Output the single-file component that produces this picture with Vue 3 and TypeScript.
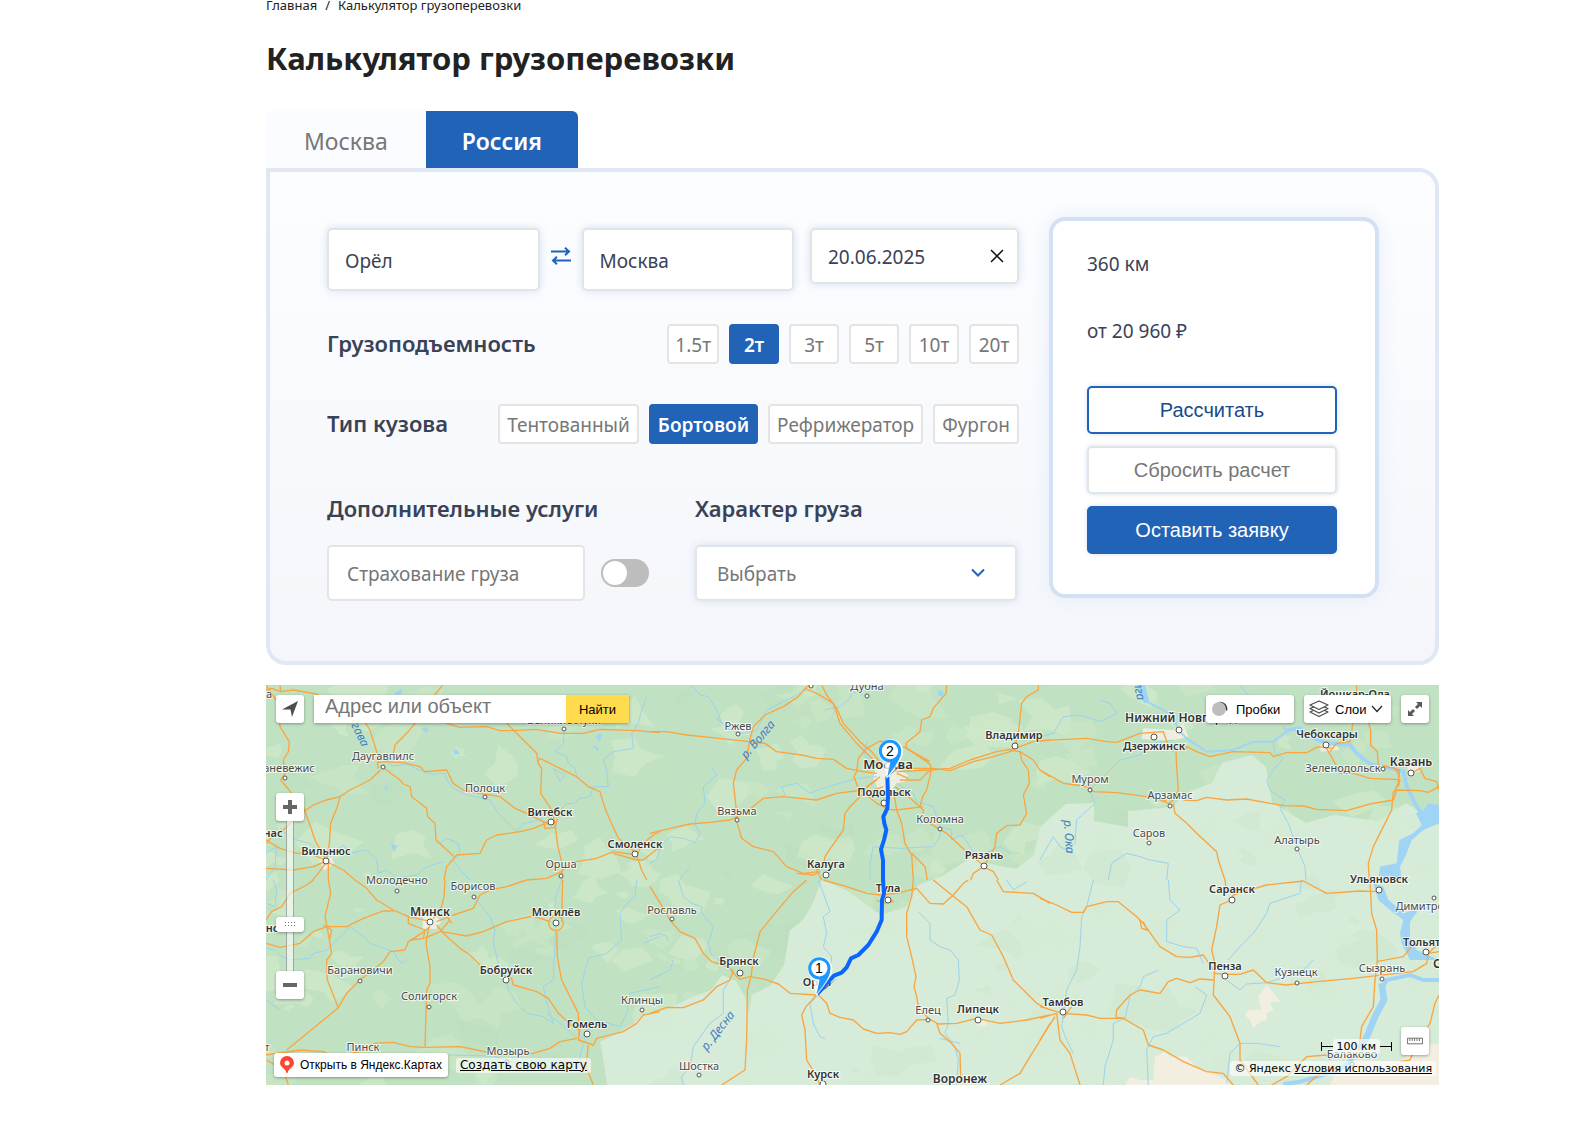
<script setup lang="ts">
import { ref } from 'vue'

type City = [name: string, x: number, y: number, dotX?: number, dotY?: number, weight?: number]
interface Sheet {
  ox: number
  oy: number
  roads: string[]
  rivers: string[]
  cities: City[]
}

const from = ref('Орёл')
const to = ref('Москва')
const date = ref('20.06.2025')
const capacities = ['1.5т', '2т', '3т', '5т', '10т', '20т']
const capacity = ref('2т')
const bodies = ['Тентованный', 'Бортовой', 'Рефрижератор', 'Фургон']
const body = ref('Бортовой')
const insured = ref(false)
const cargo = ref('')
const tab = ref('Россия')

function swap() {
  const old = from.value
  from.value = to.value
  to.value = old
}

// Map sheets: line work is in thirds of a pixel, ox/oy is each sheet's origin.
const sheets: Sheet[] = [
  {
    ox: -18, oy: -15,
    roads: [
      'M60,15 L62,35 L100,30 L170,42 L230,75 L300,105 L330,150 L350,215 L355,245',
      'M18,30 L35,25 L62,35 M18,15 L55,70 L60,140 L88,185 L85,215 L70,240 L75,280 L62,300 L75,315 L95,340 L130,380 L148,430 L165,480 L195,535',
      'M548,15 L520,50 L465,130 L440,160 L405,195 L398,235 L370,245 L352,248 L355,265',
      'M370,245 L430,248 L480,260 L495,275 L560,270 L580,310 L610,330 L660,340 L720,350 L765,385 L800,400 L850,425 L870,430',
      'M560,130 L600,142 L680,140 L720,152 L760,152 L830,148 L900,160 L970,160 L1020,148 L1130,152 L1200,158',
      'M740,130 L800,190 L830,220 L835,250 L845,265 L842,340 L875,390 L885,430 L892,490 L908,560 L905,600',
      'M832,245 L840,235 L900,265 L950,290 L985,320 L1020,335 L1035,385 L1050,420 L1075,475 L1130,520',
      'M368,262 L420,300 L430,312 L450,320 L455,350 L475,365 L500,385 L503,410 L525,430 L528,480 L555,505 L582,530',
      'M362,270 L330,300 L270,330 L240,350 L200,360 L160,375 L110,410 L70,450 L40,465 L20,490',
      'M240,350 L232,380 L212,430 L208,490 L200,540',
      'M870,430 L850,433 L820,445 L780,455 L710,465 L680,480 L660,520 L590,525 L560,560 L552,600',
      'M850,425 L855,445 L885,443 L892,415',
      'M1130,525 L1060,515 L1010,535 L930,548 L905,575 L860,595 L800,600',
      'M1130,525 L1150,490 L1180,465 L1200,455 M1130,525 L1145,570 L1160,600 M1060,520 L1130,540 L1150,540 L1200,500',
      'M18,480 L60,505 L110,520 L150,520 L195,540 M18,565 L100,570 L160,560 L195,545 M200,545 L175,580 L158,600 M205,545 L205,600 M200,545 L250,570 L285,600',
    ],
    rivers: [
      'M385,250 L400,258 L440,252 L460,262 L490,275 L520,283 L555,280 L560,300 L580,325 L620,345 L690,360 L715,400 L740,425 L770,455 L790,430 L820,425 L850,415',
      'M900,390 L920,370 L940,372 L960,355 L990,350 L1000,320 L1045,320 L1040,270 L1030,240 L1060,215 L1120,205 L1115,160 L1135,130 L1145,90 L1160,50',
      'M912,150 L910,190 L885,215 L920,230 L925,250 L945,265 L950,290 M880,265 L900,305 L915,285 L880,265',
      'M60,445 L90,470 L110,480 L150,490 L180,520 L230,510 L250,495 L270,520 L320,510 L350,540 L355,580 L380,570 L410,595 L470,585 L500,560 L550,545',
      'M540,490 L560,475 L595,490 L600,520 L580,540 L600,570 L630,600',
      'M18,520 L50,500 L45,560 L18,600',
    ],
    cities: [
      ['а', 28, 52], ['Великие Луки', 913, 132, 913, 146],
      ['Даугавпилс', 369, 238, 369, 261], ['аневежис', 87, 274, 75, 294],
      ['Полоцк', 675, 335, 676, 352], ['Витебск', 871, 406, 872, 427, 600],
      ['Смоленск', 1124, 502, 1124, 522, 600], ['Орша', 902, 563, 902, 587],
      ['Вильнюс', 198, 523, 198, 543, 600], ['нас', 40, 470, undefined, undefined, 600],
    ],
  },
  {
    ox: -18, oy: 585,
    roads: [
      'M160,0 L140,15 L90,40 L65,80 L35,95 L18,120',
      'M205,0 L212,40 L195,110 L205,160 L215,220 L200,240 L202,300 L235,383',
      'M18,190 L60,202 L120,190 L160,155 L200,140 L260,140 L310,115 L370,93 L400,93 M190,135 L215,150 L210,175',
      'M285,0 L320,25 L350,60 L400,90 L445,110 L500,122',
      'M555,0 L552,50 L545,80 L520,115',
      'M800,0 L740,20 L690,30 L660,45 L640,85 L580,105 L530,125',
      'M510,140 L485,160 L445,185 L435,210 L390,215 L370,245 L300,300 L260,340 L235,383 L160,445 L80,510',
      'M507,140 L498,190 L510,260 L510,310 L500,330 L495,500',
      'M530,135 L550,160 L600,205 L630,225 L660,255 L730,285 L755,295 L760,315 L830,335 L865,355 L895,400 L940,440 L960,450',
      'M545,155 L620,168 L670,155 L740,125 L820,108 L870,125',
      'M445,110 L445,130 L495,150 L490,175 L450,180 M565,115 L575,130 M493,175 L540,155 L570,120',
      'M908,0 L905,125 M866,130 a22,22 0 1 0 44,0 a22,22 0 1 0 -44,0',
      'M890,155 L892,230 L905,300 L930,350 L955,400 L958,470',
      'M18,525 L120,510 L190,515 L220,530 L300,515 L345,490 L400,487 L450,500 L495,502 L600,500 L650,510 L720,525 L820,520 L870,505 L900,485 L950,475',
      'M960,450 L955,480 L1000,495 L1010,475 L1090,455 L1130,430 L1150,405 L1200,395',
      'M985,495 L978,560 L1000,615 M20,540 L70,570 L85,615',
    ],
    rivers: [
      'M18,205 L45,210 L60,225 L90,240 L150,235 L160,220 L200,210 L250,160 L270,140 L310,170 L330,190 L360,200 L400,215 L415,240 L430,250 L445,235',
      'M18,70 L45,80 L50,30 L40,0',
      'M650,60 L690,110 L705,150 L700,190 L715,250 L740,290 L745,330 L770,370 L800,400 L850,410 L880,430 L870,400 L858,360 L850,320 L880,300 L885,180 L885,60 L905,0',
      'M1130,0 L1125,50 L1110,60 L1080,100 L1085,180 L1040,220 L985,235 L965,310 L975,380 L1010,420 L1080,440 L1100,400 L1110,340 L1200,320',
      'M860,400 L900,430 L960,480 L1000,430 M18,360 L60,390',
      'M560,525 L700,528 L800,560 L950,570 L975,470 M1150,190 L1200,170',
    ],
    cities: [
      ['Молодечно', 411, 10, 412, 32], ['Борисов', 640, 30, 641, 52],
      ['Минск', 510, 106, 510, 126, 700], ['Могилёв', 888, 108, 888, 129, 600],
      ['нс', 35, 156, undefined, undefined, 600], ['Барановичи', 300, 282, 301, 304],
      ['Бобруйск', 737, 280, 739, 301, 600], ['Солигорск', 508, 358, 508, 380],
      ['Клинцы', 1146, 370, 1147, 389], ['Гомель', 982, 442, 981, 462, 600],
      ['Пинск', 310, 513], ['Мозырь', 743, 524, 742, 545], ['т', 20, 513],
    ],
  },
  {
    ox: 1152, oy: -15,
    roads: [
      'M0,155 L50,155 L110,165 L235,178 L298,185',
      'M298,185 L310,140 L345,105 L400,80 L445,50 L470,20 L490,15',
      'M298,185 L290,235 L260,270 L250,310 L258,380 L262,430 L275,475 L310,500 L370,515 L410,560 L460,580 L510,575',
      'M298,185 L345,190 L380,215 L455,225 L500,235 L550,238 L590,265 L640,275 L680,280',
      'M465,25 L500,40 L550,70 L570,130 L620,190 L650,220 L690,260',
      'M515,15 L530,45 L560,85 L580,130 L630,185 L665,215 L700,260',
      'M890,15 L888,40 L850,85 L840,110 L815,120 L810,155 L768,190 L770,205 L830,245 L842,255 L842,280 L830,330 L818,350 L810,380',
      'M0,460 L60,445 L120,432 L180,427 L240,420 L290,395 L340,355 L400,350 L500,360 L560,340 L640,330 L680,300',
      'M715,190 L690,183 L650,205 L625,235 L620,275 L612,290 L625,325 L650,345 L680,370 L715,388 L740,390 L820,380',
      'M650,330 L600,380 L585,400 L580,450 L545,500 L525,530 L520,560',
      'M740,275 L840,270 L900,265 L960,240 L1040,215 L1095,205 L1150,185 L1200,180',
      'M760,265 L850,265 L900,272 L970,245 L1030,230 L1090,212',
      'M1165,15 L1165,30 L1130,50 L1115,70 L1105,160 L1095,200',
      'M1070,208 L1110,215 L1115,240 L1135,270 L1138,310 L1120,345 L1130,400 L1110,435 L1070,437 L1040,460 L1035,500 L1005,555',
      'M735,320 L770,345 L820,390 L820,410 L840,430 L890,460 L960,525 L1000,555',
      'M730,330 L740,390 L755,430 L765,490 L785,525 L790,600 M785,520 L825,560 L832,600',
      'M1000,560 L970,580 L962,600 M1000,560 L1030,575 L1045,600 M1110,215 L1150,240 L1170,270 L1200,290',
      'M690,290 L650,320 M700,320 L660,335 M750,300 L810,300 L840,270 M760,200 L840,245 M740,280 L775,295',
      'M510,575 L490,585 L440,580 M520,560 L500,570 L515,600',
    ],
    rivers: [
      'M125,15 L150,45 L175,50 L200,90 L215,130 L200,115 L240,150 L280,160 L320,150 L350,90 L400,65 L470,30',
      'M185,262 L200,285 L160,320 L165,370 L140,400 L135,435 L150,460 L135,488 L100,475 L60,470 L30,500 L20,540 L0,550',
      'M525,90 L570,80 L600,55 L605,35 L640,45',
      'M405,345 L395,320 L440,310 L480,340 L520,325 L570,310 L620,295 L680,290',
      'M740,310 L790,340 L800,365 L850,380 L870,440 L905,450 L905,480 L935,465 L960,500 L980,530 L1050,500 L1080,520',
      'M660,600 L660,550 L670,500 L750,505 L850,500 L870,470 L872,445',
      'M120,565 L95,590 L90,600 M655,180 L640,215 L660,250 M1175,15 L1200,15',
    ],
    cities: [
      ['Дубна', 652, 30, 652, 47], ['Ржев', 265, 149, 265, 163],
      ['Вязьма', 260, 405, 260, 421], ['Москва', 713, 267, undefined, undefined, 800],
      ['Подольск', 703, 346, 703, 368, 600], ['Владимир', 1093, 176, 1095, 198, 600],
      ['Коломна', 870, 428, 871, 446], ['Калуга', 528, 562, 528, 585, 600],
      ['Рязань', 1002, 537, 1002, 559, 600], ['', 483, 0, 483, 18],
    ],
  },
  {
    ox: 1152, oy: 585,
    roads: [
      'M0,20 L40,85 L60,120 L90,155 L135,175 L160,220 L185,245 L235,260 L255,285 L270,298 L300,290',
      'M470,0 L430,35 L400,70 L375,100 L330,155 L310,235 L303,290 L292,330 L290,480 L285,570 L215,615',
      'M300,290 L345,298 L385,312 L420,340 L500,345',
      'M0,400 L50,382 L100,383 L160,360 L200,320 L240,300 L250,270',
      'M500,345 L468,380 L455,405 L465,450 L470,540 L500,590 L510,615',
      'M505,345 L530,370 L540,400 L570,412 L610,420 L640,447 L680,460 L720,458 L750,463 L770,455 L800,420 L840,418 L865,432 L920,430 L980,415 L1050,430 L1130,420 L1200,405',
      'M790,0 L785,50 L770,100 L770,170 L785,230 L798,290 L792,320 L800,350 L805,380 L835,415',
      'M860,430 L870,460 L900,485 L930,520 L932,590',
      'M520,0 L590,20 L650,40 L690,45 L740,40 L800,25 L840,70 L880,72 L910,45 L940,10 L955,0',
      'M850,0 L880,25 L905,45 L950,80 L990,150 L1025,165 L1060,230 L1090,300 L1160,370 L1200,390',
      'M1040,0 L1060,35 L1150,40 L1200,70',
      'M1050,615 L1110,580 L1140,530 L1165,490 L1200,430',
      'M680,60 L700,70 L730,65 L700,45',
    ],
    rivers: [
      'M85,0 L100,50 L125,70 L155,80 L155,100 L190,140 L175,190 L185,225 L250,270 M240,300 L220,330 L220,400 L180,430 L130,500 L120,560 L95,590 L100,615',
      'M505,0 L520,40 L540,95 L520,110 L530,160 L520,200 L545,230 L540,280 L510,340 L480,370 L490,430 L510,470 L525,475',
      'M805,95 L840,130 L840,180 L870,200 L900,210 L925,240 L928,300 L915,345 L890,355 L895,430 L885,460 L915,500 L925,540 L920,615',
      'M870,475 L930,490 M0,170 L30,160 L50,170 L55,185 M70,240 L60,270 L0,300 M1070,0 L1090,30 L1130,5',
    ],
    cities: [
      ['Рославль', 65, 100, 65, 116], ['Тула', 714, 36, 714, 60, 600],
      ['Брянск', 268, 255, 270, 279, 600], ['Орёл', 502, 317, undefined, undefined, 600],
      ['Елец', 834, 400, 835, 419], ['Липецк', 984, 399, 984, 421, 600],
      ['Шостка', 147, 570, 148, 586], ['Курск', 518, 594, 518, 612, 600],
      ['Воронеж', 930, 607, undefined, undefined, 700],
    ],
  },
  {
    ox: 2322, oy: -15,
    roads: [
      'M0,182 L140,175 L200,185 L230,187 L300,160 L370,155 L382,190 L400,215',
      'M0,270 L70,310 L110,315 L150,322 L160,335 L230,338 L320,350 L380,362',
      'M408,215 L410,260 L415,330 L400,360 L385,370 L340,352',
      'M400,208 L435,210 L440,200 L470,215 L510,230 L580,215 L690,218 L700,230 L740,218 L800,218 L835,200 L880,205',
      'M430,360 L470,362 L500,352 L560,360 L620,357 L690,370 L730,377 L790,378 L830,388 L920,392 L990,372 L1060,360 L1070,330 L1140,332 L1165,337 L1197,320',
      'M400,370 L405,400 L440,430 L470,460 L530,515 L535,540 L555,600',
      'M860,205 L885,250 L900,280 L940,280 L990,295 L1060,298 L1080,300 L1075,320',
      'M950,15 L950,60 L940,120 L930,185 L890,190 L870,215',
      'M980,110 L992,150 L992,195 L1012,215 L1015,255 L1065,265 L1080,290',
      'M1115,280 L1140,265 L1155,295 L1190,305 L1197,330',
      'M1060,335 L1055,390 L1035,430 L1000,500 L985,550 L988,600 M1060,265 L1078,270 L1075,310 L1060,340',
    ],
    rivers: [
      'M0,170 L40,160 L70,110 L120,105 L180,125 L230,100 L210,70 L180,60',
      'M400,180 L340,190 L300,225 L240,240 L190,290 L150,330 L165,370 L110,420 L105,490 L80,510 L60,500 L40,470 L0,540',
      'M205,600 L215,550 L260,520 L300,530 L330,540 L385,550 L380,600',
      'M700,190 L705,220 L730,235 L700,270 L680,300 L690,330 L735,360 L720,385 L745,430 L770,500 L795,560 L798,600',
      'M600,15 L620,40 L650,60',
    ],
    cities: [
      ['Йошкар-Ола', 945, 54, undefined, undefined, 600],
      ['Нижний Новгород', 424, 125, 417, 150, 700], ['Дзержинск', 341, 208, 341, 170, 600],
      ['Муром', 149, 309, 149, 331], ['Арзамас', 390, 356, 389, 377],
      ['Саров', 326, 470, 326, 488], ['Алатырь', 770, 490, 770, 508],
      ['Чебоксары', 860, 173, 858, 196, 600], ['Зеленодольск', 910, 276, 1028, 266],
      ['Казань', 1112, 258, 1113, 279, 700], ['Ульяновск', 1017, 609, 1017, 631, 600],
    ],
  },
  {
    ox: 2322, oy: 585,
    roads: [
      'M0,55 L50,75 L95,97 L130,97 L140,80 L200,65 L235,65 L290,110 L310,130 L360,200 L410,230 L450,232 L490,225 L520,270',
      'M300,120 L305,145 L322,150 L310,125',
      'M575,60 L540,75 L530,140 L515,210 L525,250 L520,345 L570,410 L600,490 L600,540 L655,615',
      'M575,60 L580,45 L610,35 L680,15 L790,3 L860,40 L960,33 L1010,35 M555,0 L560,40',
      'M990,0 L995,100 L1010,150 L1012,240 L1005,300 L1000,380 L965,440 L955,520',
      'M520,280 L560,283 L600,283 L640,270 L680,308 L740,315 L830,305 L940,295 L1010,287 L1120,275 L1160,250 L1165,220 L1197,215',
      'M1010,245 L1090,230 L1115,200 M1197,190 L1165,220',
      'M520,300 L480,297 L450,308 L410,295 L385,305 L360,340 L300,330 L270,345 L230,390 L228,412 L255,415',
      'M0,380 L50,395 L70,400 L140,405 L180,415 L250,415 L310,450 L325,495 L370,510 L430,545 L500,575 L550,580 L580,615',
      'M50,400 L60,480 L90,520 L120,615 M50,400 L0,415 M45,410 L0,480 M70,415 L95,380',
      'M1197,345 L1185,370 L1170,430 L1130,490 L1110,540 L1080,545',
      'M695,615 L740,590 L800,530 L860,525 L870,540 M800,615 L840,580 L900,560',
    ],
    rivers: [
      'M160,0 L140,80 L125,110 L120,200 L110,270 L80,330 L70,400 L65,440 L80,480 L100,520',
      'M385,0 L390,60 L420,90 L380,120 L380,185 L430,200 L470,205 L490,250',
      'M785,0 L780,40 L690,70 L680,100 L640,160 L600,200 L565,240',
      'M355,270 L310,290 L300,320 L270,350 L255,415 L220,430 L220,480 L195,560 L190,615',
      'M465,320 L500,345 L480,400 L430,430 L380,460 L340,470 L320,510 L325,615',
      'M560,300 L600,330 L620,312 L680,308 L740,290 L780,280 L820,240',
      'M560,610 L570,520 L600,490 L650,490 L720,500',
    ],
    cities: [
      ['Саранск', 576, 38, 576, 60, 600], ['Димитровград', 1186, 90, 1183, 53],
      ['Тольятти', 1164, 198, 1157, 217, 600], ['Пенза', 555, 268, 555, 289, 600],
      ['Кузнецк', 769, 288, 770, 308], ['Сызрань', 1027, 276, 1027, 298],
      ['Самара', 1248, 264, undefined, undefined, 700], ['Тамбов', 68, 376, 69, 397, 600],
      ['Балаково', 936, 533, 936, 552],
    ],
  },
]

const cities = sheets.flatMap((s) =>
  s.cities.map(([name, x, y, dotX, dotY, weight]) => ({
    name,
    x: Math.round((x + s.ox) / 3),
    y: Math.ceil((y + s.oy) / 3),
    dot: dotX !== undefined && dotY !== undefined
      ? { x: Math.round((dotX + s.ox) / 3), y: Math.round((dotY + s.oy) / 3) }
      : null,
    kind: weight === 800 ? 'capital' : weight === 700 ? 'major' : weight === 600 ? 'city' : 'town',
  })),
)

const riverNames = [
  { name: 'р. Волга', x: 495, y: 57, angle: -50 },
  { name: 'Даугава', x: 86, y: 42, angle: 64 },
  { name: 'р. Десна', x: 455, y: 348, angle: -52 },
  { name: 'р. Ока', x: 799, y: 152, angle: 86 },
  { name: 'Волга', x: 868, y: 0, angle: 78 },
]

// Woodland and field patches, spread by a fixed-seed generator.
let seed = 7
const rnd = () => {
  seed = (seed * 16807) % 2147483647
  return seed / 2147483647
}
const patches = Array.from({ length: 300 }, () => {
  const cx = rnd() * 1173
  const cy = rnd() * 400
  const n = 6 + Math.floor(rnd() * 5)
  const size = 4 + rnd() * 20
  const points = Array.from({ length: n }, (_, i) => {
    const a = (i / n) * Math.PI * 2
    const r = size * (0.3 + rnd() * 0.9)
    return `${Math.round(cx + Math.cos(a) * r * 1.4)},${Math.round(cy + Math.sin(a) * r)}`
  }).join(' ')
  return { points, pale: rnd() > 0.25 }
})
</script>

<template>
  <main class="page">
    <nav class="crumbs" aria-label="Навигация">
      <a href="#">Главная</a><span>/</span><span>Калькулятор грузоперевозки</span>
    </nav>
    <h1>Калькулятор грузоперевозки</h1>

    <div class="tabs">
      <button v-for="t in ['Москва', 'Россия']" :key="t" type="button" class="tab" :class="{ active: tab === t }" @click="tab = t">{{ t }}</button>
    </div>

    <form class="panel" @submit.prevent>
      <div class="fields">
        <div class="route">
          <input v-model="from" class="box place" type="text" aria-label="Откуда" />
          <button type="button" class="swap" aria-label="Поменять местами" @click="swap">
            <svg width="20" height="18" viewBox="0 0 20 18" fill="none" stroke="#2163b6" stroke-width="2">
              <path d="M0 4.500H18M14 .8L18 4.500L14 8.200" /><path d="M20 13.500H2M6 9.800L2 13.500L6 17.200" />
            </svg>
          </button>
          <input v-model="to" class="box place" type="text" aria-label="Куда" />
          <div class="box date">
            <input v-model="date" type="text" aria-label="Дата" />
            <button type="button" aria-label="Очистить дату" @click="date = ''">
              <svg width="14" height="14" viewBox="0 0 14 14" stroke="#111" stroke-width="1.500"><path d="M1 1L13 13M13 1L1 13" /></svg>
            </button>
          </div>
        </div>

        <div class="choice">
          <h2>Грузоподъемность</h2>
          <div class="chips">
            <button v-for="c in capacities" :key="c" type="button" class="chip short" :class="{ active: capacity === c }" @click="capacity = c">{{ c }}</button>
          </div>
        </div>
        <div class="choice">
          <h2>Тип кузова</h2>
          <div class="chips">
            <button v-for="b in bodies" :key="b" type="button" class="chip" :class="{ active: body === b }" @click="body = b">{{ b }}</button>
          </div>
        </div>

        <div class="extras">
          <div class="services">
            <h2>Дополнительные услуги</h2>
            <div class="service">
              <label class="insurance" for="insurance">Страхование груза</label>
              <input id="insurance" v-model="insured" type="checkbox" class="toggle" />
            </div>
          </div>
          <div class="cargo">
            <label class="heading" for="cargo">Характер груза</label>
            <div class="selectwrap">
              <select id="cargo" v-model="cargo" class="box">
                <option value="">Выбрать</option>
              </select>
              <svg class="chev" width="14" height="10" viewBox="0 0 14 10" fill="none" stroke="#2163b6" stroke-width="2"><path d="M1 1.500L7 7.500L13 1.500" /></svg>
            </div>
          </div>
        </div>
      </div>

      <aside class="card">
        <p>360 км</p>
        <p>от 20 960 ₽</p>
        <div class="actions">
          <button type="submit" class="action outline">Рассчитать</button>
          <button type="reset" class="action plain">Сбросить расчет</button>
          <button type="button" class="action solid">Оставить заявку</button>
        </div>
      </aside>
    </form>

    <section class="map" aria-label="Карта маршрута">
      <svg class="canvas" viewBox="0 0 1173 400" preserveAspectRatio="xMidYMid slice">
        <rect width="1173" height="400" fill="#c1e2c2" />
        <g>
          <polygon v-for="(p, i) in patches" :key="i" :points="p.points" :fill="p.pale ? '#c9e7c5' : '#bbdfbd'" :opacity="p.pale ? 0.7 : 0.4" />
        </g>
        <path class="steppe" d="M341 400L336 366L334 357L352 348L368 338L378 328L400 325L422 314L445 305L456 290L470 296L482 318L482 344L448 368L418 378L414 400Z" />
        <path class="steppe" d="M410 400L414 378L446 368L480 340L486 310L505 300L518 280L524 245L536 236L545 222L556 195L580 205L615 230L640 222L652 200L674 192L694 180L708 170L720 178L750 184L768 170L774 142L800 119L828 118L828 136L862 142L862 126L906 122L920 108L946 98L956 78L986 70L1000 82L1006 118L1040 138L1068 130L1112 136L1140 118L1173 140L1173 400Z" />
        <g opacity=".3">
          <polygon v-for="(p, i) in patches.slice(60, 240)" :key="i" :points="p.points" :fill="p.pale ? '#d9edd2' : '#c6e5c6'" />
        </g>
        <g transform="translate(774 195) scale(.33333)" fill="#f2efe1">
          <path d="M375 515L390 530L440 530L470 560L520 580L560 600L570 615H255L270 590L300 600L340 600L345 530Z" />
          <path d="M1130 500L1197 490V615H870L880 590L940 540L1080 545Z" />
          <path d="M680 315L705 345L720 365L690 365L700 390L680 400V420L660 425L640 445L630 420L615 405L625 390L665 390L660 375L655 350Z" />
        </g>
        <g transform="scale(.33333)" class="built">
          <path d="M1832 240l40-15 30 30 25 15-10 20-25 5-20 25-35-5-15-35z" />
          <path d="M2632 130l90 5 30-20 15 40-50 12-90-5z" /><path d="M470 690h40l15 20-15 22h-40z" />
          <path d="M3420 230l30-5 15 30-35 20z" /><path d="M160 525l35-10 10 20-30 22z" />
          <path d="M3160 180l50-5 10 20-55 5z" /><path d="M2130 1005l30 0 3 18-30 0z" />
        </g>
        <g transform="translate(774 -5) scale(.33333)" class="lake">
          <path d="M292 15H315L328 65L312 70L300 45Z" />
          <path d="M1150 390L1165 370L1197 375V430L1150 450L1115 480L1100 520L1080 560L1085 600H1015L1020 560L1070 550L1078 480L1120 460L1145 435L1128 400Z" />
          <path class="volga thin" d="M320 65L370 90L400 110L415 150L440 175L500 215L580 210L640 185L700 185L740 155L730 140" />
          <path class="volga" d="M740 150L780 145L800 165L860 190L930 195L950 220L980 245L1000 255L1040 262L1090 275L1100 320L1125 370L1150 410" />
        </g>
        <g transform="translate(774 195) scale(.33333)" class="lake">
          <path d="M1000 10L1030 20L1045 60L1095 100L1150 70L1110 125V170L1130 210L1165 225L1197 240H1110L1085 190L1080 160L1090 120L1050 90L1015 60Z" />
          <path class="volga" d="M1197 300L1150 300L1110 285L1040 300L1028 320" />
          <path class="volga wide" d="M1025 310L1032 360L1005 410L985 460L960 510" />
          <path class="volga" d="M955 520L900 570L780 605L730 612" />
        </g>
        <g transform="translate(-6 -5) scale(.33333)" class="lake">
          <path d="M485 148l14-8 6 8-4 12zM580 212l10-4 10 14-18 2zM390 490l22 8-10 17zM1008 170l10-10 8 6-6 18zM998 195l18 8-3 12zM370 318l16 4-6 10zM405 38l20-10v14l-18 5z" />
          <circle cx="2042" cy="40" r="9" />
        </g>

        <g v-for="(s, i) in sheets" :key="i" :transform="`scale(.33333) translate(${s.ox} ${s.oy})`" fill="none" stroke-linejoin="round">
          <path v-for="(r, k) in s.rivers" :key="'w' + k" class="river" :d="r" />
          <path v-for="(r, k) in s.roads" :key="'r' + k" class="road" :d="r" />
        </g>

        <g v-for="(c, i) in cities" :key="'c' + i">
          <circle v-if="c.dot" class="dot" :cx="c.dot.x" :cy="c.dot.y" :r="c.kind === 'town' ? 2 : 3" />
          <text v-if="c.name" class="name" :class="c.kind" :x="c.x" :y="c.y">{{ c.name }}</text>
        </g>
        <text v-for="r in riverNames" :key="r.name" class="rivername" :transform="`translate(${r.x} ${r.y}) rotate(${r.angle})`">{{ r.name }}</text>

        <g transform="scale(.33333) translate(1152 -15)" fill="none">
          <path d="M714 290L745 258L752 240L742 268Z" fill="#555" opacity=".6" />
          <path class="trip" d="M712 290L714 350L712 385L700 410L703 430L709 450L702 480L693 508L699 540V600L702 640L696 660L695 720L680 755L655 795L625 825L603 835L590 862L575 878L552 887L530 910L502 942" />
          <path d="M502 942L560 895L530 925Z" fill="#444" opacity=".6" />
          <g v-for="pin in [[720, 213, 2], [508, 865, 1]]" :key="pin[2]" :transform="`translate(${pin[0]} ${pin[1]})`">
            <path d="M-8 77L-16 30A34 34 0 1 1 34 14Q26 36 -8 77Z" fill="#fff" stroke="#fff" stroke-width="6" opacity=".8" />
            <path d="M-8 77L2 28L33 10Q28 32 -8 77Z" fill="#1e98ff" />
            <circle r="29" fill="#fff" stroke="#1e98ff" stroke-width="9" />
          </g>
        </g>
        <text class="pin" x="624" y="71">2</text>
        <text class="pin" x="553" y="288">1</text>
      </svg>

      <div class="topbar">
        <button type="button" class="ctl square" aria-label="Моё местоположение">
          <svg width="16" height="16" viewBox="0 0 16 16"><path d="M0 8.500L16 0L10 16L8.500 8.500Z" fill="#4d4d4d" /></svg>
        </button>
        <div class="search">
          <input type="search" placeholder="Адрес или объект" aria-label="Адрес или объект" />
          <button type="button">Найти</button>
        </div>
        <button type="button" class="ctl traffic">
          <svg width="16" height="16" viewBox="0 0 16 16"><path d="M7 1A7 7 0 0 1 15 10L11 6Z" fill="#333" /><circle cx="7" cy="8" r="7" fill="#bdbdbd" /></svg>
          Пробки
        </button>
        <button type="button" class="ctl layers">
          <svg width="20" height="18" viewBox="0 0 20 18" fill="#fff" stroke="#4d4d4d" stroke-width="1.300" stroke-linejoin="round"><path d="M1 12L10 16.500L19 12L10 8Z" /><path d="M1 8.500L10 13L19 8.500L10 5Z" /><path d="M1 5L10 9.500L19 5L10 1Z" /></svg>
          Слои
          <svg width="12" height="8" viewBox="0 0 12 8" fill="none" stroke="#222" stroke-width="1.200"><path d="M1 1L6 6.500L11 1" /></svg>
        </button>
        <button type="button" class="ctl square" aria-label="На весь экран">
          <svg width="16" height="16" viewBox="0 0 16 16" fill="#5a5a5a" stroke="#5a5a5a"><path d="M9 1H15V7ZM1 9V15H7Z" stroke="none" /><path d="M9 7L13 3M7 9L3 13" stroke-width="3" /></svg>
        </button>
      </div>

      <div class="zoom">
        <button type="button" class="ctl square" aria-label="Приблизить"><svg width="14" height="14" viewBox="0 0 14 14"><path d="M7 0V14M0 7H14" stroke="#666" stroke-width="4" /></svg></button>
        <div class="track"><span class="grip"><svg width="12" height="5" viewBox="0 0 12 5" fill="#777"><path d="M1 0h1v1H1zM4 0h1v1H4zM7 0h1v1H7zM10 0h1v1h-1zM1 3h1v1H1zM4 3h1v1H4zM7 3h1v1H7zM10 3h1v1h-1z" /></svg></span></div>
        <button type="button" class="ctl square" aria-label="Отдалить"><svg width="14" height="14" viewBox="0 0 14 14"><path d="M0 7H14" stroke="#666" stroke-width="4" /></svg></button>
      </div>

      <div class="links">
        <a class="open" href="#">
          <svg width="14" height="18" viewBox="0 0 14 18"><path d="M7 0A7 7 0 0 1 14 7C14 11.500 8 12.500 7.600 17H6.400C6 12.500 0 11.500 0 7A7 7 0 0 1 7 0Z" fill="#f43" /><circle cx="7" cy="7" r="2.500" fill="#fff" /></svg>
          Открыть в Яндекс.Картах
        </a>
        <a class="create" href="#">Создать свою карту</a>
      </div>

      <div class="corner">
        <div class="scale"><i></i><span>100 км</span><i class="end"></i></div>
        <button type="button" class="ctl square" aria-label="Измерение расстояний">
          <svg width="20" height="8" viewBox="0 0 20 8" fill="none" stroke="#4d4d4d"><path d="M.5 .5H19.500V7.500H.5ZM3.500 1V4M6.500 1V4M9.500 1V4M12.500 1V4M15.500 1V4" /></svg>
        </button>
      </div>
      <div class="copy">© Яндекс <a href="#">Условия использования</a></div>
    </section>
  </main>
</template>

<style>
body {
  margin: 0;
  background: #fff;
}
</style>

<style scoped>
* {
  box-sizing: border-box;
}
.page {
  padding: 0 157px 36px 266px;
  font-family: "Noto Sans", sans-serif;
  color: #3a4256;
  overflow: hidden;
}
button,
input,
select {
  font: inherit;
  margin: 0;
}
button {
  cursor: pointer;
}
.crumbs {
  display: flex;
  gap: 8px;
  margin-top: -4px;
  font-size: 13px;
  line-height: 18px;
  color: #222;
}
.crumbs a {
  color: inherit;
  text-decoration: none;
}
h1 {
  margin: 24px 0 0;
  font-size: 31px;
  line-height: 40px;
  font-weight: 700;
  color: #222;
}
.tabs {
  display: flex;
  margin-top: 33px;
}
.tab {
  height: 57px;
  padding: 2px 38px 0;
  border: 0;
  border-radius: 6px 0 0 0;
  background: #fbfcff;
  color: #777;
  font-size: 23px;
}
.tab:last-child {
  padding: 2px 36px 0;
  border-radius: 0 6px 0 0;
}
.tab.active {
  background: #2163b6;
  color: #fff;
  font-weight: 600;
}
.panel {
  display: flex;
  align-items: flex-start;
  gap: 30px;
  padding: 45px 56px 60px 57px;
  border: 4px solid #e0e8f5;
  border-radius: 0 20px 20px 20px;
  background: linear-gradient(#fcfdff, #f4f6fb);
}
.fields {
  flex: 1;
  min-width: 0;
  padding-top: 11px;
}
.box {
  border: 2px solid #e3e4e4;
  border-radius: 5px;
  background: #fff;
  box-shadow: 0 0 8px #d3e1f4;
  color: #3a4256;
  font-size: 19px;
}
.route {
  display: flex;
  align-items: flex-start;
}
.place {
  flex: 1;
  min-width: 0;
  height: 63px;
  padding: 2px 16px 0;
}
.swap {
  width: 42px;
  height: 56px;
  padding: 0;
  border: 0;
  background: none;
  line-height: 0;
}
.date {
  display: flex;
  align-items: center;
  width: 209px;
  height: 56px;
  margin-left: 16px;
  padding: 0 13px 0 16px;
}
.date input {
  flex: 1;
  width: 0;
  padding: 2px 0 0;
  border: 0;
  background: none;
  color: inherit;
}
.date button {
  padding: 0;
  border: 0;
  background: none;
  line-height: 0;
}
h2,
.heading {
  display: block;
  margin: 0;
  padding-bottom: 2px;
  font-size: 22px;
  line-height: 28px;
  font-weight: 600;
  white-space: nowrap;
}
.choice {
  display: flex;
  align-items: center;
  justify-content: space-between;
  height: 40px;
  margin-top: 40px;
}
.route + .choice {
  margin-top: 33px;
}
.chips {
  display: flex;
  gap: 10px;
}
.chip {
  height: 40px;
  padding: 1px 7px 0;
  border: 2px solid #e3e4e4;
  border-radius: 4px;
  background: #fff;
  color: #777;
  font-size: 19px;
  white-space: nowrap;
}
.chip.short {
  min-width: 50px;
  padding: 1px 6px 0;
}
.chip.active {
  border-color: #2163b6;
  background: #2163b6;
  color: #fff;
  font-weight: 600;
}
.extras {
  display: flex;
  justify-content: space-between;
  margin-top: 50px;
}
.service {
  display: flex;
  align-items: center;
  gap: 16px;
  margin-top: 21px;
}
.insurance {
  width: 258px;
  height: 56px;
  padding: 2px 18px 0;
  border: 2px solid #e3e4e4;
  border-radius: 5px;
  background: #fff;
  color: #777;
  font-size: 19px;
  line-height: 50px;
}
.toggle {
  appearance: none;
  width: 48px;
  height: 28px;
  padding: 2px;
  border-radius: 14px;
  background: #bdbdbd;
}
.toggle::before {
  content: "";
  display: block;
  width: 24px;
  height: 24px;
  border-radius: 12px;
  background: #fff;
}
.toggle:checked {
  background: #2163b6;
}
.toggle:checked::before {
  margin-left: 20px;
}
.cargo {
  width: 324px;
  padding-right: 2px;
}
.selectwrap {
  position: relative;
  margin-top: 21px;
}
.selectwrap select {
  display: block;
  appearance: none;
  width: 100%;
  height: 56px;
  padding: 2px 20px 0;
  color: #777;
}
.chev {
  position: absolute;
  right: 32px;
  top: 23px;
  pointer-events: none;
}
.card {
  width: 330px;
  padding: 30px 38px 40px 34px;
  border: 4px solid #d3e1f4;
  border-radius: 16px;
  background: #fff;
  box-shadow: 0 0 20px #e6edf8;
  font-size: 19px;
  line-height: 27px;
}
.card p {
  margin: 0 0 40px;
}
.actions {
  display: flex;
  flex-direction: column;
  gap: 12px;
  padding-top: 1px;
}
.action {
  height: 48px;
  border: 2px solid #2163b6;
  border-radius: 5px;
  background: #fff;
  box-shadow: 0 0 5px #d3e1f4;
  font-family: "Liberation Sans", sans-serif;
  font-size: 20px;
}
.outline {
  color: #1a4a8c;
}
.plain {
  border-color: #e3e4e4;
  color: #777;
}
.solid {
  background: #2163b6;
  color: #fff;
}

.map {
  position: relative;
  height: 400px;
  margin-top: 20px;
  overflow: hidden;
  font-family: "Liberation Sans", sans-serif;
  color: #000;
}
.canvas {
  display: block;
  width: 100%;
  height: 100%;
}
.steppe {
  fill: #d6ebd8;
}
.built {
  fill: #eceee2;
}
.lake {
  fill: #9fd4f5;
}
.volga {
  fill: none;
  stroke: #9fd4f5;
  stroke-width: 12;
}
.volga.thin {
  stroke-width: 6;
}
.volga.wide {
  stroke-width: 20;
}
.river {
  stroke: #9bd2ec;
  stroke-width: 3;
}
.road {
  stroke: #f9a540;
  stroke-width: 4;
}
.trip {
  stroke: #0a66ff;
  stroke-width: 12;
  stroke-linejoin: round;
}
.dot {
  fill: #fff;
  stroke: #555;
  stroke-width: 1px;
}
.name {
  font-family: "Noto Sans", sans-serif;
  font-size: 11px;
  text-anchor: middle;
  fill: #4a4a4a;
  stroke: rgba(255, 255, 255, 0.75);
  stroke-width: 2px;
  paint-order: stroke;
}
.city,
.major,
.capital {
  font-weight: 600;
  fill: #333;
}
.major {
  font-size: 12px;
}
.capital {
  font-size: 13px;
}
.rivername {
  font-family: "Noto Sans", sans-serif;
  font-size: 12px;
  font-style: italic;
  text-anchor: middle;
  fill: #3f7fc4;
}
.pin {
  font-family: "Liberation Sans", sans-serif;
  font-size: 14px;
  text-anchor: middle;
}
.ctl {
  display: flex;
  align-items: center;
  justify-content: center;
  height: 28px;
  padding: 0 6px;
  border: 0;
  border-radius: 3px;
  background: #fff;
  box-shadow: 0 1px 3px rgba(0, 0, 0, 0.35);
  font-size: 13px;
  white-space: nowrap;
}
.square {
  width: 28px;
  flex-shrink: 0;
}
.topbar {
  position: absolute;
  top: 10px;
  left: 10px;
  right: 10px;
  display: flex;
  gap: 10px;
}
.search {
  display: flex;
  margin-right: auto;
  box-shadow: 0 1px 3px rgba(0, 0, 0, 0.35);
}
.search input {
  width: 252px;
  height: 28px;
  padding: 0 11px 6px;
  border: 0;
  background: #fff;
  font-size: 20px;
}
.search input::placeholder {
  color: #777;
}
.search button {
  width: 63px;
  padding: 0;
  border: 0;
  border-radius: 0 3px 3px 0;
  background: #ffdb4d;
  font-size: 13px;
}
.traffic {
  justify-content: flex-start;
  width: 88px;
  gap: 8px;
}
.layers {
  justify-content: flex-start;
  width: 87px;
  gap: 6px;
  padding: 0 5px;
}
.layers svg:last-child {
  margin-left: -2px;
}
.zoom {
  position: absolute;
  top: 108px;
  left: 10px;
}
.track {
  width: 8px;
  height: 150px;
  margin: 0 auto;
  border: solid rgba(0, 0, 0, 0.3);
  border-width: 0 1px;
  background: rgba(255, 255, 255, 0.6);
}
.grip {
  display: flex;
  align-items: center;
  justify-content: center;
  position: relative;
  top: 96px;
  left: -11px;
  width: 28px;
  height: 15px;
  border-radius: 3px;
  background: #fff;
  box-shadow: 0 1px 3px rgba(0, 0, 0, 0.35);
}
.links {
  position: absolute;
  left: 8px;
  bottom: 8px;
  display: flex;
  align-items: center;
  gap: 8px;
}
.open {
  display: flex;
  align-items: center;
  gap: 6px;
  height: 24px;
  padding: 0 6px;
  border-radius: 3px;
  background: #fff;
  box-shadow: 0 1px 3px rgba(0, 0, 0, 0.35);
  color: #000;
  font-size: 12px;
  text-decoration: none;
}
.create,
.copy,
.scale {
  font-family: "DejaVu Sans", sans-serif;
  font-size: 11px;
  line-height: 15px;
}
.create,
.copy {
  padding: 0 4px;
  border-radius: 3px;
  background: rgba(255, 255, 255, 0.6);
}
.create {
  font-size: 12px;
}
.create,
.copy a {
  color: #000;
}
.copy {
  position: absolute;
  right: 3px;
  bottom: 9px;
}
.corner {
  position: absolute;
  right: 10px;
  bottom: 30px;
  display: flex;
  align-items: flex-end;
  gap: 9px;
}
.scale {
  display: flex;
  align-items: center;
  margin-bottom: 1px;
}
.scale span {
  padding: 0 4px;
  border-radius: 3px;
  background: rgba(255, 255, 255, 0.6);
}
.scale i {
  width: 12px;
  height: 9px;
  border-left: 1px solid #000;
  background: linear-gradient(#000, #000) center / 100% 1px no-repeat;
}
.scale .end {
  border: 0;
  border-right: 1px solid #000;
}
</style>
